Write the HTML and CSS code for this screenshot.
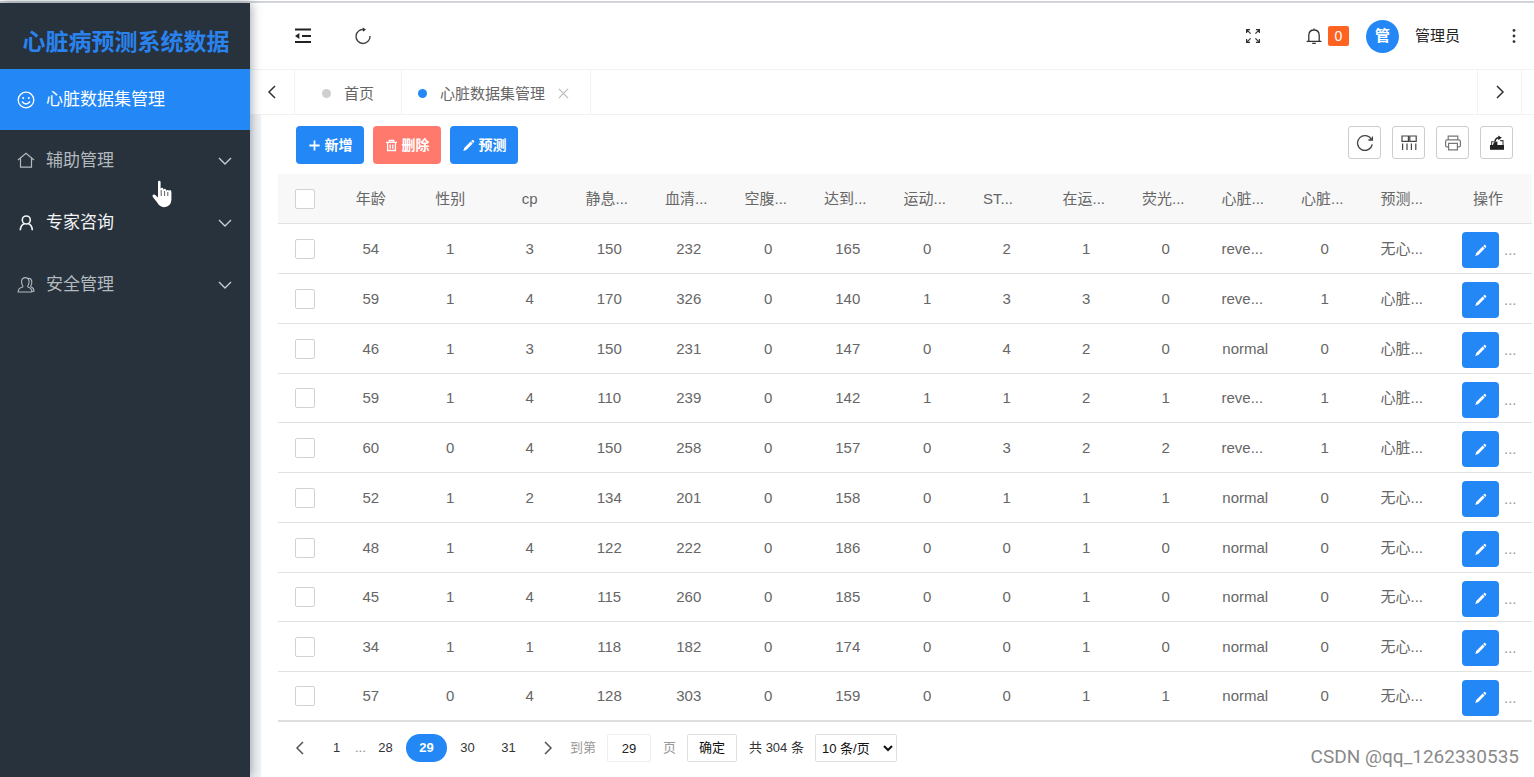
FILE: index.html
```
<!DOCTYPE html>
<html lang="zh-CN">
<head>
<meta charset="utf-8">
<title>心脏病预测系统数据</title>
<link rel="stylesheet" href="styles.css">
</head>
<body>
<svg class="defs" aria-hidden="true">
  <symbol id="i-pencil" viewBox="0 0 14 14"><path d="M1.4 12.8 2.4 9.6 9.3 2.7 11.5 4.9 4.6 11.8ZM9.9 2.1 11 1.1Q11.5.7 12 1.1L13 2.1Q13.5 2.6 13 3.1L12.1 4.3Z" fill="currentColor"/></symbol>
  <symbol id="i-down" viewBox="0 0 14 14"><path d="M1 4 7 10 13 4" fill="none" stroke="currentColor" stroke-width="1.4"/></symbol>
  <symbol id="i-left" viewBox="0 0 14 14"><path d="M10 1 4 7 10 13" fill="none" stroke="currentColor" stroke-width="1.5"/></symbol>
  <symbol id="i-right" viewBox="0 0 14 14"><path d="M4 1 10 7 4 13" fill="none" stroke="currentColor" stroke-width="1.5"/></symbol>
</svg>
<div class="app">
  <aside class="side">
    <h1 class="logo">心脏病预测系统数据</h1>
    <nav class="menu">
      <a class="item active" href="#">
        <svg class="ico" viewBox="0 0 18 18" fill="none" stroke="currentColor" stroke-width="1.3"><circle cx="9" cy="9" r="7.8"/><path d="M5 10.5Q9 15.5 13 10.5"/><circle cx="6.2" cy="7" r="1" fill="currentColor" stroke="none"/><circle cx="11.8" cy="7" r="1" fill="currentColor" stroke="none"/></svg>
        <span>心脏数据集管理</span></a>
      <a class="item" href="#">
        <svg class="ico" viewBox="0 0 18 18" fill="none" stroke="currentColor" stroke-width="1.2"><path d="M1 8 9 1.4 17 8M3.5 6.6V15.2H14.5V6.6"/></svg>
        <span>辅助管理</span><svg class="arrow"><use href="#i-down"/></svg></a>
      <a class="item bright" href="#">
        <svg class="ico" viewBox="0 0 18 18" fill="none" stroke="currentColor" stroke-width="1.6"><circle cx="9.3" cy="6" r="4"/><path d="M3.3 16.3Q3.6 11 7.3 9.8M11.5 9.8Q15 11 15.3 16.3"/></svg>
        <span>专家咨询</span><svg class="arrow"><use href="#i-down"/></svg></a>
      <a class="item" href="#">
        <svg class="ico" viewBox="0 0 18 18" fill="none" stroke="currentColor" stroke-width="1.1"><path d="M1.2 16Q1 12.2 5.2 11.2 6.4 10.6 5.5 9.4 4.2 7.4 4.6 4.8 5.2 1.6 8.3 1.6T12 4.8Q12.4 7.4 11.1 9.4 10.2 10.6 11.4 11.2 15 12.2 14.8 16ZM11.4 2.2Q14.4 2 14.8 5.4 15 8 13.8 9.6 13.4 10.4 14.2 10.9 17 12 17 15.2H15"/></svg>
        <span>安全管理</span><svg class="arrow"><use href="#i-down"/></svg></a>
    </nav>
    <svg class="pointer" viewBox="0 0 20 28" aria-hidden="true"><path d="M6 2Q6 .8 7.2 .8T8.6 2V9Q9 7.6 10.2 7.8T11.4 9V10Q12 8.6 13.2 8.9T14.2 10V11Q15 9.8 16 10T16.9 11.2V10.8Q17.6 9.8 18.5 10.2T19.4 12V20Q19 26.6 12 27.2 7.4 27 5.2 22.6L.8 17Q0 15.4 1.2 14.8T3.6 15.2L6 17.4Z" fill="#fff"/><path d="M9.2 10V16M12.6 11V16M15.8 12V16" stroke="#28333e" stroke-width=".8"/></svg>
  </aside>
  <div class="main">
    <header class="top">
      <button class="ghost" aria-label="收起菜单"><svg width="18" height="16" viewBox="0 0 18 16" fill="none" stroke="#222" stroke-width="2"><path d="M1 1.5H17M8 8H17M1 14H17"/><path d="M1 8 5.4 5V11Z" fill="#222" stroke="none"/></svg></button>
      <button class="ghost refresh" aria-label="刷新"><svg width="18" height="18" viewBox="0 0 18 18" fill="none" stroke="#444" stroke-width="1.4"><path d="M10.5 2.6A7 7 0 1 0 16 9"/><path d="M8.6 .4 12 2.6 9 4.8Z" fill="#333" stroke="none"/></svg></button>
      <div class="userbar">
        <button class="ghost" aria-label="全屏"><svg width="16" height="16" viewBox="0 0 16 16" fill="none" stroke="#333" stroke-width="1.2"><path d="M1.6 5V1.6H5M1.6 1.6 5.6 5.6M11 1.6H14.4V5M14.4 1.6 10.4 5.6M1.6 11V14.4H5M1.6 14.4 5.6 10.4M14.4 11V14.4H11M14.4 14.4 10.4 10.4"/></svg></button>
        <button class="ghost notice" aria-label="消息"><svg width="16" height="17" viewBox="0 0 16 17" fill="none" stroke="#333" stroke-width="1.3"><path d="M.6 13.4H15.4M2.8 13.2V7.2Q3 2 8 2T13.2 7.2V13.2M8 .6V2M6.2 15.4H9.8"/></svg><span class="badge">0</span></button>
        <span class="avatar">管</span>
        <span class="name">管理员</span>
        <button class="ghost" aria-label="更多"><svg width="6" height="16" viewBox="0 0 6 16" fill="#333"><circle cx="3" cy="2.4" r="1.4"/><circle cx="3" cy="8" r="1.4"/><circle cx="3" cy="13.6" r="1.4"/></svg></button>
      </div>
    </header>
    <div class="tabs">
      <button class="tabnav" aria-label="向左"><svg><use href="#i-left"/></svg></button>
      <a class="tab" href="#"><i class="dot"></i>首页</a>
      <a class="tab" href="#"><i class="dot on"></i>心脏数据集管理<svg class="close" viewBox="0 0 12 12"><path d="M1 1 11 11M11 1 1 11" stroke="#bbb" stroke-width="1.3"/></svg></a>
      <button class="tabnav next" aria-label="向右"><svg><use href="#i-right"/></svg></button>
    </div>
    <main class="card">
      <div class="tools">
        <button class="btn"><svg viewBox="0 0 14 14"><path d="M7 1.5V12.5M1.5 7H12.5" stroke="currentColor" stroke-width="1.9"/></svg>新增</button>
        <button class="btn danger"><svg viewBox="0 0 14 14" fill="none" stroke="currentColor" stroke-width="1.4"><path d="M1 3.6H13M4.6 3.2V1.6H9.4V3.2M2.8 4V12.4H11.2V4M5.6 6V10.4M8.4 6V10.4"/></svg>删除</button>
        <button class="btn"><svg><use href="#i-pencil"/></svg>预测</button>
        <div class="acts">
          <button class="act" aria-label="刷新"><svg viewBox="0 0 18 18" fill="none" stroke="#444" stroke-width="1.3"><path d="M15.4 5.4A7.4 7.4 0 1 0 16.2 10.4M16.4 2.4V6H12.4"/></svg></button>
          <button class="act" aria-label="列筛选"><svg viewBox="0 0 18 18" fill="none" stroke="#444" stroke-width="1.2"><path d="M2 2H8.4V7.4H2ZM9.8 2H16.2V7.4H9.8ZM2.6 9.6V16M7 9.6V16M11.4 9.6V16M15.8 9.6V16"/></svg></button>
          <button class="act" aria-label="打印"><svg viewBox="0 0 18 18" fill="none" stroke="#777" stroke-width="1.2"><path d="M4.2 5.6V2.2H13.8V5.6M4.4 12.8H3Q1.6 12.8 1.6 11.4V7.4Q1.6 5.8 3.2 5.8H14.8Q16.4 5.8 16.4 7.4V11.4Q16.4 12.8 15 12.8H13.6M4.6 9.4H13.4V15.8H4.6Z"/></svg></button>
          <button class="act" aria-label="导出"><svg viewBox="0 0 18 18"><path d="M2 11H16V15.8H2Z" fill="#222"/><path d="M3.6 11V7.8H7M12 6.6H15V11" fill="none" stroke="#444" stroke-width="1.1"/><path d="M5 11Q5.4 7.6 9.4 7.6L9.4 11Z" fill="#222"/><path d="M7 7.6Q7.6 4 10.6 3.8" fill="none" stroke="#222" stroke-width="1.5"/><path d="M10.2 1.4 13.8 3.8 10.2 6.2Z" fill="#222"/></svg></button>
        </div>
      </div>
      <table class="grid">
        <colgroup><col class="c-check"><col span="14"><col class="c-op"></colgroup>
        <thead><tr><th><input type="checkbox" aria-label="全选"></th><th>年龄</th><th>性别</th><th>cp</th><th class="cut">静息...</th><th class="cut">血清...</th><th class="cut">空腹...</th><th class="cut">达到...</th><th class="cut">运动...</th><th class="cut">ST...</th><th class="cut">在运...</th><th class="cut">荧光...</th><th class="cut">心脏...</th><th class="cut">心脏...</th><th class="cut">预测...</th><th>操作</th></tr></thead>
        <tbody>
          <tr><td><input type="checkbox" aria-label="选择"></td><td>54</td><td>1</td><td>3</td><td>150</td><td>232</td><td>0</td><td>165</td><td>0</td><td>2</td><td>1</td><td>0</td><td class="cut">reve...</td><td>0</td><td class="cut">无心...</td><td class="op"><button class="edit" aria-label="编辑"><svg><use href="#i-pencil"/></svg></button><span>...</span></td></tr>
          <tr><td><input type="checkbox" aria-label="选择"></td><td>59</td><td>1</td><td>4</td><td>170</td><td>326</td><td>0</td><td>140</td><td>1</td><td>3</td><td>3</td><td>0</td><td class="cut">reve...</td><td>1</td><td class="cut">心脏...</td><td class="op"><button class="edit" aria-label="编辑"><svg><use href="#i-pencil"/></svg></button><span>...</span></td></tr>
          <tr><td><input type="checkbox" aria-label="选择"></td><td>46</td><td>1</td><td>3</td><td>150</td><td>231</td><td>0</td><td>147</td><td>0</td><td>4</td><td>2</td><td>0</td><td>normal</td><td>0</td><td class="cut">心脏...</td><td class="op"><button class="edit" aria-label="编辑"><svg><use href="#i-pencil"/></svg></button><span>...</span></td></tr>
          <tr><td><input type="checkbox" aria-label="选择"></td><td>59</td><td>1</td><td>4</td><td>110</td><td>239</td><td>0</td><td>142</td><td>1</td><td>1</td><td>2</td><td>1</td><td class="cut">reve...</td><td>1</td><td class="cut">心脏...</td><td class="op"><button class="edit" aria-label="编辑"><svg><use href="#i-pencil"/></svg></button><span>...</span></td></tr>
          <tr><td><input type="checkbox" aria-label="选择"></td><td>60</td><td>0</td><td>4</td><td>150</td><td>258</td><td>0</td><td>157</td><td>0</td><td>3</td><td>2</td><td>2</td><td class="cut">reve...</td><td>1</td><td class="cut">心脏...</td><td class="op"><button class="edit" aria-label="编辑"><svg><use href="#i-pencil"/></svg></button><span>...</span></td></tr>
          <tr><td><input type="checkbox" aria-label="选择"></td><td>52</td><td>1</td><td>2</td><td>134</td><td>201</td><td>0</td><td>158</td><td>0</td><td>1</td><td>1</td><td>1</td><td>normal</td><td>0</td><td class="cut">无心...</td><td class="op"><button class="edit" aria-label="编辑"><svg><use href="#i-pencil"/></svg></button><span>...</span></td></tr>
          <tr><td><input type="checkbox" aria-label="选择"></td><td>48</td><td>1</td><td>4</td><td>122</td><td>222</td><td>0</td><td>186</td><td>0</td><td>0</td><td>1</td><td>0</td><td>normal</td><td>0</td><td class="cut">无心...</td><td class="op"><button class="edit" aria-label="编辑"><svg><use href="#i-pencil"/></svg></button><span>...</span></td></tr>
          <tr><td><input type="checkbox" aria-label="选择"></td><td>45</td><td>1</td><td>4</td><td>115</td><td>260</td><td>0</td><td>185</td><td>0</td><td>0</td><td>1</td><td>0</td><td>normal</td><td>0</td><td class="cut">无心...</td><td class="op"><button class="edit" aria-label="编辑"><svg><use href="#i-pencil"/></svg></button><span>...</span></td></tr>
          <tr><td><input type="checkbox" aria-label="选择"></td><td>34</td><td>1</td><td>1</td><td>118</td><td>182</td><td>0</td><td>174</td><td>0</td><td>0</td><td>1</td><td>0</td><td>normal</td><td>0</td><td class="cut">无心...</td><td class="op"><button class="edit" aria-label="编辑"><svg><use href="#i-pencil"/></svg></button><span>...</span></td></tr>
          <tr><td><input type="checkbox" aria-label="选择"></td><td>57</td><td>0</td><td>4</td><td>128</td><td>303</td><td>0</td><td>159</td><td>0</td><td>0</td><td>1</td><td>1</td><td>normal</td><td>0</td><td class="cut">无心...</td><td class="op"><button class="edit" aria-label="编辑"><svg><use href="#i-pencil"/></svg></button><span>...</span></td></tr>
        </tbody>
      </table>
      <div class="pager">
        <a class="pg narrow" href="#" aria-label="上一页"><svg><use href="#i-left"/></svg></a>
        <a class="pg narrow" href="#">1</a>
        <span class="dots">...</span>
        <a class="pg" href="#">28</a>
        <a class="pg cur" href="#">29</a>
        <a class="pg" href="#">30</a>
        <a class="pg" href="#">31</a>
        <a class="pg narrow" href="#" aria-label="下一页"><svg><use href="#i-right"/></svg></a>
        <label class="jump">到第<input type="text" value="29">页</label>
        <button class="go">确定</button>
        <span class="total">共 304 条</span>
        <select class="size" aria-label="每页条数"><option>10 条/页</option></select>
      </div>
    </main>
  </div>
</div>
<div class="mark">CSDN @qq_1262330535</div>
</body>
</html>
```
FILE: styles.css
```
* { box-sizing: border-box; }
body {
  margin: 0;
  background: #fff;
  color: #666;
  font: 15px/20px "Liberation Sans", "Noto Sans CJK SC", sans-serif;
}
a { color: inherit; text-decoration: none; }
button, input, select { font: inherit; color: inherit; margin: 0; }
button { cursor: pointer; }
svg { display: block; flex: none; }
.defs { display: none; }

.app {
  display: flex;
  min-height: 100vh;
  padding-top: 3px;
  background: linear-gradient(#fff 1px, #c9ccd1 1px, #d9dbde 3px, #fff 3px);
}

/* sidebar */
.side {
  position: relative;
  z-index: 1;
  flex: 0 0 250px;
  background: #27323c;
  box-shadow: 1px 0 10px rgba(40, 55, 75, .45);
}
.logo {
  display: flex;
  align-items: center;
  justify-content: center;
  height: 66px;
  margin: 0;
  padding: 12px 0 0 2px;
  font-size: 23px;
  line-height: 28px;
  font-weight: 700;
  color: #2a82ee;
  white-space: nowrap;
}
.item {
  display: flex;
  align-items: center;
  gap: 11px;
  height: 62px;
  padding: 0 18px 0 17px;
  font-size: 17px;
  color: #b4b9be;
}
.item.active { height: 61px; background: #2388f6; color: #fff; }
.item.bright { color: #f2f3f4; }
.ico { width: 18px; height: 18px; }
.arrow { width: 14px; height: 14px; margin-left: auto; color: #c9cdd1; }
.pointer { position: absolute; left: 152px; top: 177px; width: 20px; height: 28px; }

/* header */
.main { flex: 1; min-width: 0; display: flex; flex-direction: column; background: #f0f2f4; }
.top {
  display: flex;
  align-items: center;
  height: 67px;
  padding: 0 17px 0 44px;
  background: #fff;
  border-bottom: 1px solid #f3f3f3;
}
.ghost { display: flex; align-items: center; padding: 0; border: 0; background: none; }
.refresh { margin-left: 42px; }
.userbar { display: flex; align-items: center; margin-left: auto; color: #222; }
.notice { gap: 6px; margin-left: 45px; }
.badge {
  width: 21px;
  height: 20px;
  border-radius: 2px;
  background: #ff6322;
  color: #fff;
  font-size: 14px;
  text-align: center;
}
.avatar {
  width: 33px;
  height: 33px;
  margin: 0 16px 0 17px;
  border-radius: 50%;
  background: #2388f6;
  color: #fff;
  font-weight: 700;
  line-height: 32px;
  text-align: center;
}
.name { margin-right: 51px; }

/* tabs */
.tabs { display: flex; height: 45px; padding-right: 12px; background: #fff; border-bottom: 1px solid #f1f1f1; }
.tabnav {
  display: flex;
  align-items: center;
  justify-content: center;
  width: 45px;
  padding: 0;
  border: 0;
  border-right: 1px solid #f3f3f3;
  background: none;
  color: #333;
}
.tabnav svg { width: 14px; height: 14px; }
.next { margin-left: auto; border-left: 1px solid #f3f3f3; }
.tab { display: flex; align-items: center; padding: 3px 27px 0; border-right: 1px solid #f3f3f3; }
.tab + .tab { padding: 3px 21px 0 16px; }
.dot { width: 9px; height: 9px; margin-right: 13px; border-radius: 50%; background: #cfcfcf; }
.dot.on { background: #2388f6; }
.close { width: 11px; height: 11px; margin-left: 13px; }

/* content */
.card { flex: 1; margin-left: 11px; padding: 11px 2px 0 17px; background: #fff; }
.tools { display: flex; gap: 9px; height: 48px; padding: 0 19px 0 18px; align-items: flex-start; }
.btn {
  display: flex;
  align-items: center;
  justify-content: center;
  gap: 4px;
  width: 68px;
  height: 38px;
  padding: 0;
  border: 0;
  border-radius: 4px;
  background: #2388f6;
  color: #fff;
  font-size: 14px;
  font-weight: 700;
}
.btn svg { width: 13px; height: 13px; }
.danger { background: #ff796d; }
.acts { display: flex; gap: 11px; margin-left: auto; }
.act {
  display: flex;
  align-items: center;
  justify-content: center;
  width: 33px;
  height: 33px;
  padding: 0;
  border: 1px solid #ccc;
  border-radius: 3px;
  background: #fff;
}
.act svg { width: 18px; height: 18px; }

.grid { width: 100%; table-layout: fixed; border-collapse: separate; border-spacing: 0; }
.c-check { width: 53px; }
.c-op { width: 88px; }
.grid th, .grid td {
  height: 50px;
  padding: 0;
  border-bottom: 1px solid #e2e2e2;
  font-weight: 400;
  text-align: center;
  white-space: nowrap;
}
.grid th { background: #f8f8f8; }
.grid tr:nth-child(4n) td { height: 49px; }
.grid tr:last-child td { border-bottom: 2px solid #dedede; }
.grid .cut { padding-left: 16px; text-align: left; }
.grid input {
  display: block;
  appearance: none;
  width: 20px;
  height: 20px;
  margin: 0 auto;
  border: 1px solid #d2d2d2;
  border-radius: 2px;
  background: #fff;
}
.grid .op { padding: 3px 0 0 18px; text-align: left; }
.edit {
  display: inline-flex;
  align-items: center;
  justify-content: center;
  width: 37px;
  height: 36px;
  padding: 0;
  border: 0;
  border-radius: 4px;
  background: #2388f6;
  color: #fff;
  vertical-align: middle;
}
.edit svg { width: 13px; height: 13px; }
.op span { margin-left: 5px; color: #999; vertical-align: middle; }

/* pagination */
.pager { display: flex; align-items: center; padding: 12px 0 12px 3px; font-size: 13px; color: #333; }
.pg { display: flex; align-items: center; justify-content: center; width: 41px; height: 28px; }
.pg svg { width: 14px; height: 14px; color: #555; }
.narrow { width: 37px; }
.dots { width: 10px; color: #888; }
.cur { border-radius: 14px; background: #2388f6; color: #fff; font-weight: 700; }
.jump { display: flex; align-items: center; margin-left: 4px; color: #999; }
.jump input {
  width: 44px;
  height: 28px;
  margin: 0 12px 0 11px;
  padding: 0;
  border: 1px solid #eee;
  border-radius: 2px;
  background: #fff;
  color: #222;
  text-align: center;
}
.go {
  width: 50px;
  height: 28px;
  margin: 0 12px 0 11px;
  padding: 0;
  border: 1px solid #e0e0e0;
  border-radius: 2px;
  background: #fff;
  color: #111;
}
.size {
  width: 82px;
  height: 28px;
  margin-left: 11px;
  padding: 0 2px;
  border: 1px solid #e0e0e0;
  border-radius: 2px;
  background: #fff;
  color: #111;
}

.mark {
  position: absolute;
  right: 15px;
  bottom: 8px;
  color: #8a8a8a;
  font-family: Roboto, "Liberation Sans", sans-serif;
  font-size: 19px;
  line-height: 24px;
  text-shadow: 0 0 2px #fff;
}
```
